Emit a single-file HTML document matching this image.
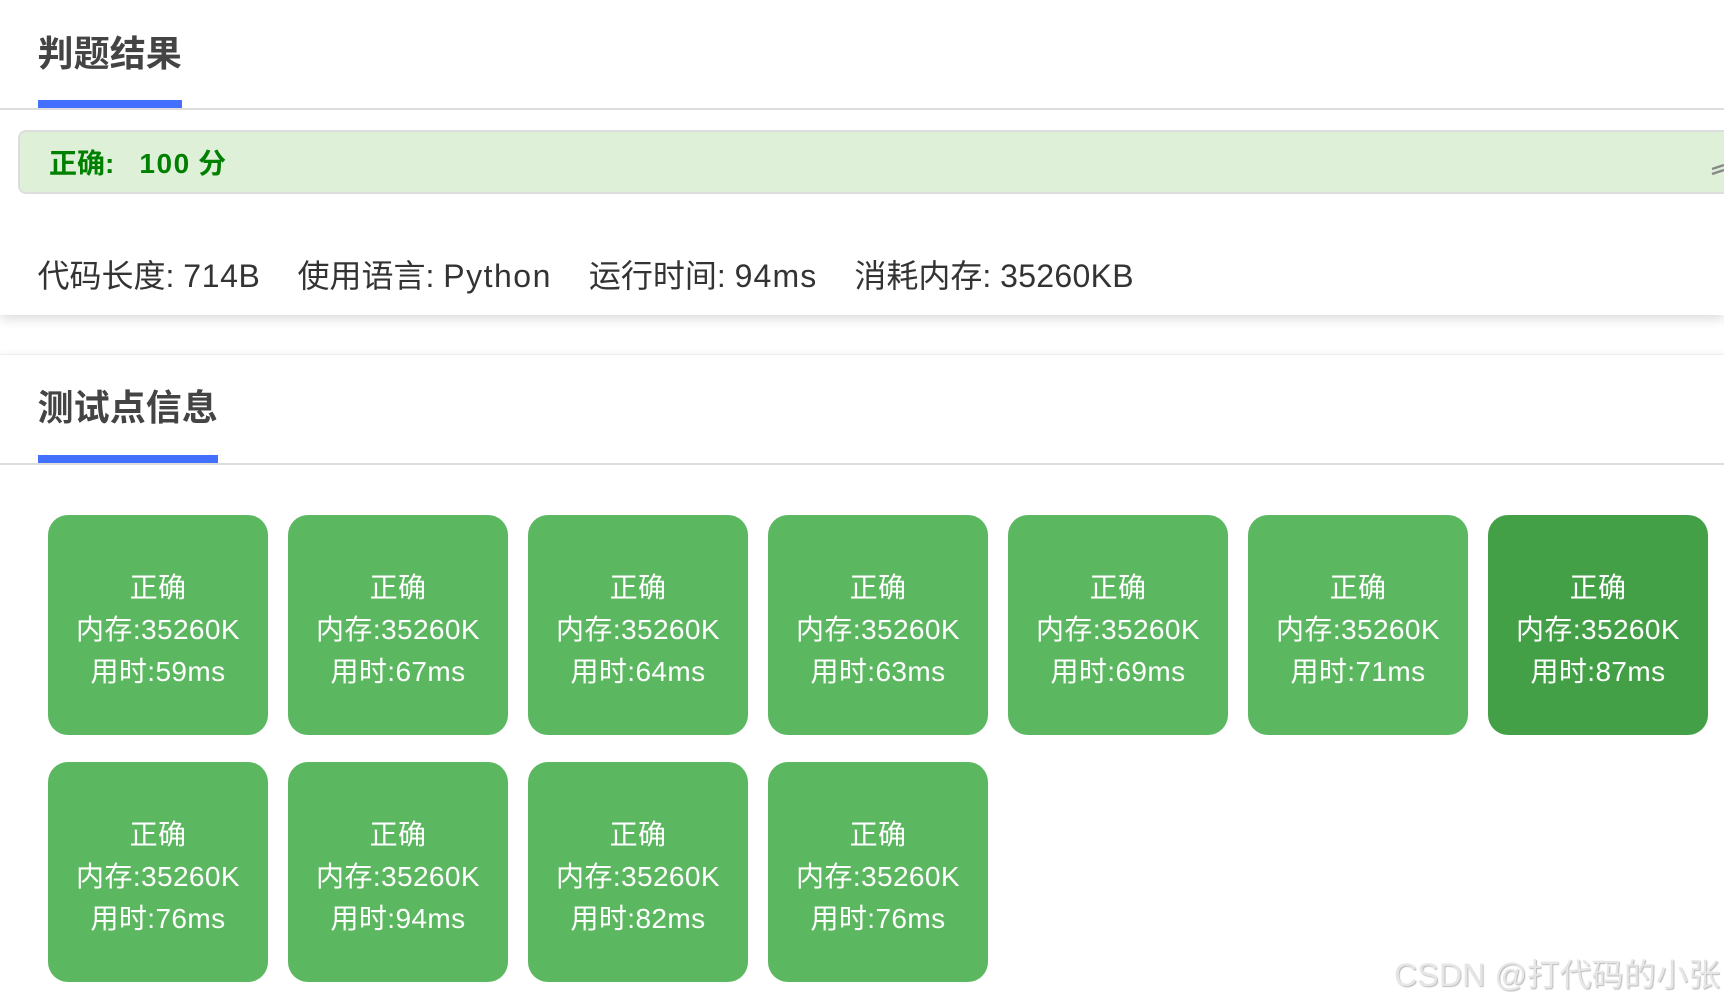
<!DOCTYPE html>
<html lang="zh"><head><meta charset="utf-8"><style>
html,body{margin:0;padding:0;background:#fff}
body{width:1724px;height:1005px;position:relative;overflow:hidden;font-family:"Liberation Sans","Noto Sans CJK SC",sans-serif}
.a{position:absolute;white-space:nowrap}
.h{font-size:36px;font-weight:700;color:#444;left:37.5px;line-height:50px;letter-spacing:.1px}
.bar{position:absolute;left:38px;height:8px;background:#4470ff}
.line{position:absolute;left:0;width:1724px;height:2px;background:#ddd}
.c{position:absolute;width:220px;height:220px;border-radius:20px;background:#5cb860;color:#fff;font-size:28px;line-height:42px;text-align:center;box-sizing:border-box;padding-top:52px;letter-spacing:.4px}
.d{background:#43a047}
</style></head><body>
<div class="a" style="left:0;top:0;width:1724px;height:1px;background:#eee"></div>
<div class="a" style="left:0;top:0;width:1724px;height:315px;background:#fff;box-shadow:0 3px 12px rgba(0,0,0,.16)"></div>
<div class="a" style="left:0;top:354px;width:1724px;height:651px;background:#fff;border-top:1px solid #eee;box-shadow:0 -2px 6px rgba(0,0,0,.04)"></div>
<div class="a h" style="top:29px">判题结果</div>
<div class="bar" style="top:100px;width:144px"></div>
<div class="line" style="top:108px"></div>
<div class="a" style="left:18px;top:130px;width:1720px;height:64px;box-sizing:border-box;background:#dff0d8;border:2px solid #ddd;border-radius:8px"></div>
<div class="a" style="left:49px;top:145px;font-size:28px;font-weight:700;color:#008000;line-height:38px">正确:<span style="margin-left:25px;letter-spacing:1.6px">100</span> <span style="letter-spacing:0;margin-left:-.5px">分</span></div>
<svg class="a" style="left:1711px;top:162px" width="13" height="14" viewBox="0 0 13 14"><path d="M1 7 13 3M1 12 13 8" stroke="#888" stroke-width="2.4" fill="none"/></svg>
<div class="a" style="left:37.5px;top:253px;font-size:32px;color:#333;line-height:46px">代码长度: <span style="letter-spacing:.6px">714B</span><span style="margin-left:37px">使用语言: <span style="letter-spacing:1.5px">Python</span></span><span style="margin-left:37px">运行时间: <span style="letter-spacing:1.1px">94ms</span></span><span style="margin-left:37px">消耗内存: <span style="letter-spacing:.3px">35260KB</span></span></div>
<div class="a h" style="top:383px">测试点信息</div>
<div class="bar" style="top:455px;width:180px"></div>
<div class="line" style="top:463px"></div>
<div class="c" style="left:48px;top:515px">正确<br>内存:35260K<br>用时:59ms</div>
<div class="c" style="left:288px;top:515px">正确<br>内存:35260K<br>用时:67ms</div>
<div class="c" style="left:528px;top:515px">正确<br>内存:35260K<br>用时:64ms</div>
<div class="c" style="left:768px;top:515px">正确<br>内存:35260K<br>用时:63ms</div>
<div class="c" style="left:1008px;top:515px">正确<br>内存:35260K<br>用时:69ms</div>
<div class="c" style="left:1248px;top:515px">正确<br>内存:35260K<br>用时:71ms</div>
<div class="c d" style="left:1488px;top:515px">正确<br>内存:35260K<br>用时:87ms</div>
<div class="c" style="left:48px;top:762px">正确<br>内存:35260K<br>用时:76ms</div>
<div class="c" style="left:288px;top:762px">正确<br>内存:35260K<br>用时:94ms</div>
<div class="c" style="left:528px;top:762px">正确<br>内存:35260K<br>用时:82ms</div>
<div class="c" style="left:768px;top:762px">正确<br>内存:35260K<br>用时:76ms</div>
<div class="a" style="left:1394px;top:952px;font-size:32px;line-height:46px;letter-spacing:.2px;color:#e6e6e6;text-shadow:1px 1px 1px #bbb">CSDN @打代码的小张</div>
</body></html>
